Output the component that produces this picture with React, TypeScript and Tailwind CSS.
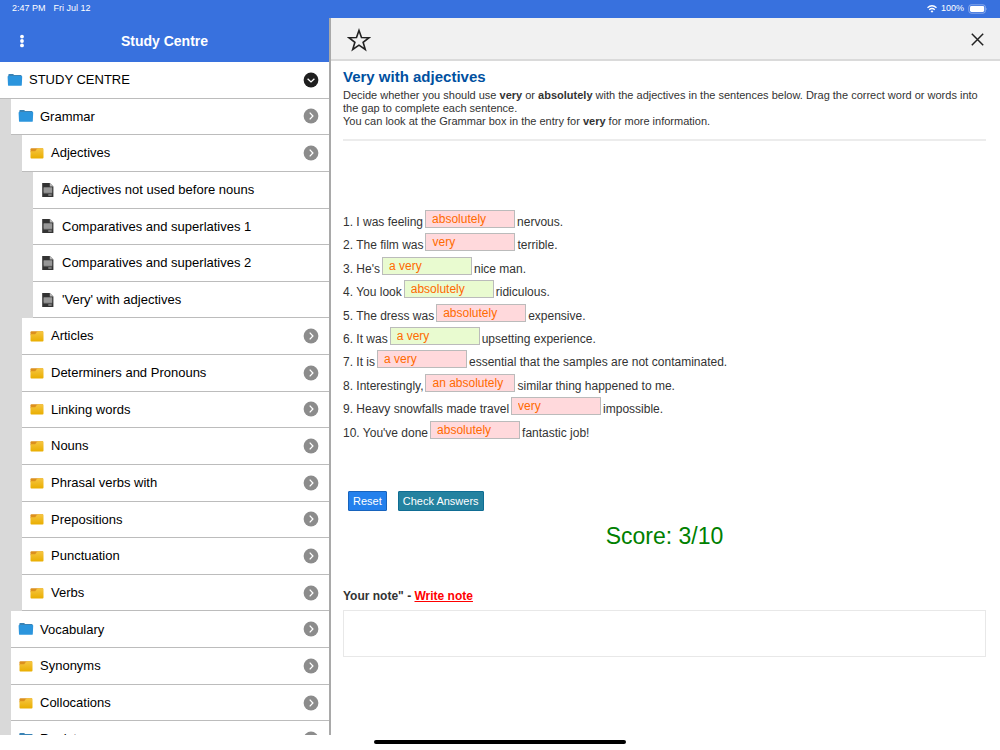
type IconKind = "blue" | "yellow" | "page";

type TreeItem = {
  label: string;
  level: 0 | 1 | 2 | 3;
  icon: IconKind;
  open?: boolean;
};

const TREE: TreeItem[] = [
  { label: "STUDY CENTRE", level: 0, icon: "blue", open: true },
  { label: "Grammar", level: 1, icon: "blue" },
  { label: "Adjectives", level: 2, icon: "yellow" },
  { label: "Adjectives not used before nouns", level: 3, icon: "page" },
  { label: "Comparatives and superlatives 1", level: 3, icon: "page" },
  { label: "Comparatives and superlatives 2", level: 3, icon: "page" },
  { label: "'Very' with adjectives", level: 3, icon: "page" },
  { label: "Articles", level: 2, icon: "yellow" },
  { label: "Determiners and Pronouns", level: 2, icon: "yellow" },
  { label: "Linking words", level: 2, icon: "yellow" },
  { label: "Nouns", level: 2, icon: "yellow" },
  { label: "Phrasal verbs with", level: 2, icon: "yellow" },
  { label: "Prepositions", level: 2, icon: "yellow" },
  { label: "Punctuation", level: 2, icon: "yellow" },
  { label: "Verbs", level: 2, icon: "yellow" },
  { label: "Vocabulary", level: 1, icon: "blue" },
  { label: "Synonyms", level: 1, icon: "yellow" },
  { label: "Collocations", level: 1, icon: "yellow" },
  { label: "Register", level: 1, icon: "blue" },
];

const INDENT = ["pl-0", "pl-[11px]", "pl-[22px]", "pl-[33px]"];

const QUESTIONS = [
  { before: "1. I was feeling", answer: "absolutely", after: "nervous.", correct: false },
  { before: "2. The film was", answer: "very", after: "terrible.", correct: false },
  { before: "3. He's", answer: "a very", after: "nice man.", correct: true },
  { before: "4. You look", answer: "absolutely", after: "ridiculous.", correct: true },
  { before: "5. The dress was", answer: "absolutely", after: "expensive.", correct: false },
  { before: "6. It was", answer: "a very", after: "upsetting experience.", correct: true },
  { before: "7. It is", answer: "a very", after: "essential that the samples are not contaminated.", correct: false },
  { before: "8. Interestingly,", answer: "an absolutely", after: "similar thing happened to me.", correct: false },
  { before: "9. Heavy snowfalls made travel", answer: "very", after: "impossible.", correct: false },
  { before: "10. You've done", answer: "absolutely", after: "fantastic job!", correct: false },
];

function ItemIcon({ kind }: { kind: IconKind }) {
  if (kind === "blue") {
    return (
      <svg width="16" height="14" viewBox="0 0 16 14" aria-hidden="true">
        <path d="M1.300 4V2q0-.9.9-.9h3.900l1 .9h6.700q.8 0 .8.8V4z" fill="#3a83b5" />
        <path d="M.6 3.700Q.5 3 1.300 3h13.200q.8 0 .7.700l-.4 8.200q0 .9-.9.9H1.900q-.9 0-.9-.9z" fill="#2b95dd" />
      </svg>
    );
  }
  if (kind === "yellow") {
    return (
      <svg width="16" height="14" viewBox="0 0 16 14" aria-hidden="true">
        <defs>
          <linearGradient id="folder-front" x1="0" y1="0" x2="0" y2="1">
            <stop offset="0" stopColor="#f6c643" />
            <stop offset="1" stopColor="#e9ae00" />
          </linearGradient>
        </defs>
        <path d="M1.500 3.200q0-.9.9-.9h11.600v4H1.500z" fill="#dc8f1c" />
        <path d="M1.500 5.300H6.200L7.800 3.100 8.900 2.200h4.800q.8 0 .8.900v8.500q0 .9-.9.900H2.400q-.9 0-.9-.9z" fill="url(#folder-front)" />
      </svg>
    );
  }
  return (
    <svg width="16" height="16" viewBox="0 0 16 16" aria-hidden="true">
      <path d="M2.200 1h7.600l3.600 3.600V15H2.200z" fill="#333" />
      <path d="M9.800 1v3.600h3.600z" fill="#b5b5b5" />
      <rect x="3.600" y="5.200" width="8.600" height="6.200" fill="#8c8c8c" />
      <path d="M3.600 7h8.600M3.600 9h8.600" stroke="#a8a8a8" strokeWidth=".8" />
      <path d="M8.300 13h3.400" stroke="#ccc" strokeWidth=".9" />
    </svg>
  );
}

function Chevron({ open }: { open?: boolean }) {
  return (
    <svg width="16" height="16" viewBox="0 0 16 16" aria-hidden="true">
      <circle cx="8" cy="8" r="7.400" fill={open ? "#1f1f1f" : "#8c8c8c"} />
      <path
        d={open ? "M4.600 6.700 8 9.900l3.400-3.200" : "M6.700 4.600 9.900 8l-3.200 3.400"}
        fill="none"
        stroke="#fff"
        strokeWidth="1.300"
      />
    </svg>
  );
}

function StatusBar() {
  return (
    <div className="flex h-[18px] shrink-0 items-center justify-between bg-[#3871de] px-3 text-[9px] text-white">
      <div className="flex gap-2">
        <span>2:47 PM</span>
        <span>Fri Jul 12</span>
      </div>
      <div className="flex items-center gap-1">
        <svg width="10" height="8" viewBox="0 0 10 8" aria-hidden="true" fill="none" stroke="#fff" strokeWidth="1.300">
          <path d="M.5 2.800q4.500-4 9 0M2.200 4.700q2.800-2.400 5.600 0" />
          <path d="M3.600 6.200q1.400-1.200 2.800 0L5 7.700z" fill="#fff" stroke="none" />
        </svg>
        <span>100%</span>
        <svg width="20" height="10" viewBox="0 0 20 10" aria-hidden="true">
          <rect x=".8" y=".8" width="16.600" height="8.400" rx="2.400" fill="none" stroke="#9db8ef" strokeWidth=".8" />
          <rect x="2" y="2" width="14.200" height="6" rx="1.400" fill="#fff" />
          <path d="M18.400 3.700q1.200 1.300 0 2.600z" fill="#9db8ef" />
        </svg>
      </div>
    </div>
  );
}

function Sidebar() {
  return (
    <aside className="flex w-[331px] shrink-0 flex-col border-r-2 border-[#a9a9a9]">
      <header className="flex h-11 shrink-0 items-center bg-[#3871de] pt-[2px] text-white">
        <button type="button" aria-label="Menu" className="flex w-11 justify-center">
          <svg width="6" height="14" viewBox="0 0 6 14" aria-hidden="true" fill="#fff">
            <circle cx="3" cy="2.600" r="1.900" />
            <circle cx="3" cy="7" r="1.900" />
            <circle cx="3" cy="11.400" r="1.900" />
          </svg>
        </button>
        <h1 className="flex-1 pr-11 text-center text-[14px] font-bold">Study Centre</h1>
      </header>
      <nav aria-label="Study Centre" className="min-h-0 flex-1 overflow-hidden bg-[#d9d9d9]">
        <ul className="grid h-[696px] auto-rows-fr">
          {TREE.map((item) => (
            <li key={item.label} className={INDENT[item.level]}>
              <button
                type="button"
                className="flex h-full w-full items-center border-b border-[#bcbcbc] bg-white pr-[10px] pl-[7px] text-left text-[13px] text-black"
              >
                <ItemIcon kind={item.icon} />
                <span className="flex-1 pl-[6px]">{item.label}</span>
                {item.level < 3 && <Chevron open={item.open} />}
              </button>
            </li>
          ))}
        </ul>
      </nav>
    </aside>
  );
}

function Exercise() {
  return (
    <main className="flex min-w-0 flex-1 flex-col">
      <div className="flex h-[43px] shrink-0 items-center justify-between border-b-2 border-[#dadada] bg-[#f1f1f1] pt-[2px] pr-4 pl-4">
        <button type="button" aria-label="Add to favourites">
          <svg width="24" height="24" viewBox="0 0 24 24" aria-hidden="true">
            <path
              d="M12 2.400 14.500 9.500l7.600.2-6 4.600 2.200 7.200L12 17.200l-6.300 4.300 2.200-7.200-6-4.600 7.600-.2z"
              fill="none"
              stroke="#222"
              strokeWidth="1.600"
            />
          </svg>
        </button>
        <button type="button" aria-label="Close">
          <svg width="13" height="13" viewBox="0 0 13 13" aria-hidden="true">
            <path d="M.8.8 12.200 12.200M12.200.8.8 12.200" stroke="#222" strokeWidth="1.500" />
          </svg>
        </button>
      </div>
      <div className="pr-[14px] pl-3 text-[12px] text-[#333]">
        <h2 className="pt-[7px] text-[15px] leading-[18px] font-bold text-[#0050a0]">Very with adjectives</h2>
        <div className="border-b-2 border-[#ececec] pt-[3px] pb-[11px] text-[11px] leading-[13px]">
          <p>
            Decide whether you should use <b>very</b> or <b>absolutely</b> with the adjectives in the sentences below.
            Drag the correct word or words into the gap to complete each sentence.
          </p>
          <p>
            You can look at the Grammar box in the entry for <b>very</b> for more information.
          </p>
        </div>
        <ol className="mt-[69px] grid h-[234px] auto-rows-fr">
          {QUESTIONS.map((q) => (
            <li key={q.before} className="flex items-start gap-[2px] leading-6">
              <span>{q.before}</span>
              <input
                type="text"
                readOnly
                aria-label={q.before}
                value={q.answer}
                className={`h-[18px] w-[90px] border border-[#bbb] px-[6px] text-[12px] text-[#ff6a00] ${
                  q.correct ? "bg-[#e9fbd0]" : "bg-[#ffd9dc]"
                }`}
              />
              <span>{q.after}</span>
            </li>
          ))}
        </ol>
        <div className="mt-[47px] flex gap-[11px] pl-[5px] text-[11px] text-white">
          <button type="button" className="h-5 rounded-[1px] border border-[#1763bd] bg-[#2380ec] px-1">
            Reset
          </button>
          <button type="button" className="h-5 rounded-[1px] border border-[#0f6d93] bg-[#2482a0] px-1">
            Check Answers
          </button>
        </div>
        <p className="mt-[10px] text-center text-[23px] leading-[30px] text-[#008000]">Score: 3/10</p>
        <p className="mt-[37px] font-bold leading-4">
          <label htmlFor="note">Your note"</label> -{" "}
          <a href="#note" className="text-[#ff0000] underline">
            Write note
          </a>
        </p>
        <textarea id="note" className="mt-[6px] block h-[47px] w-full resize-none border border-[#e8e8e8]" />
      </div>
    </main>
  );
}

export default function App() {
  return (
    <div className="flex h-screen flex-col bg-white font-['Liberation_Sans',Arial,sans-serif]">
      <StatusBar />
      <div className="flex min-h-0 flex-1">
        <Sidebar />
        <Exercise />
      </div>
      <div className="flex h-[15px] shrink-0 justify-center pt-[5px]">
        <div className="h-1 w-[252px] rounded-full bg-black" />
      </div>
    </div>
  );
}
